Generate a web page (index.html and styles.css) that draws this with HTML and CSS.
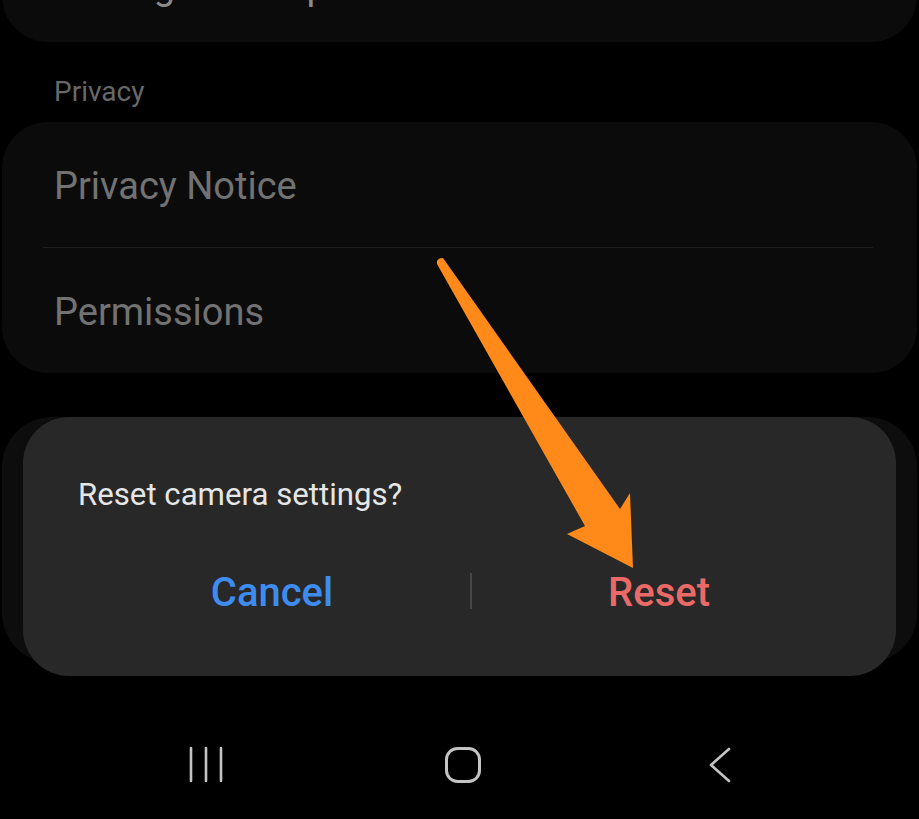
FILE: index.html
```html
<!DOCTYPE html>
<html>
<head>
  <title>Camera settings</title>
  <link rel="stylesheet" href="styles.css">
</head>
<body>
  <div class="screen">
    <div class="card card-top">
      <div class="row">Settings to keep</div>
    </div>

    <div class="section-title">Privacy</div>
    <div class="card">
      <div class="row">Privacy Notice</div>
      <div class="divider"></div>
      <div class="row">Permissions</div>
    </div>

    <div class="card card-under"></div>

    <div class="navbar">
      <div class="nav-btn">
        <svg width="40" height="40" viewBox="0 0 40 40">
          <path d="M5 3v33M20 3v33M35 3v33" stroke="#c4c4c4" stroke-width="2.6" fill="none" stroke-linecap="round"/>
        </svg>
      </div>
      <div class="nav-btn">
        <svg width="40" height="40" viewBox="0 0 40 40">
          <rect x="3.5" y="3.5" width="33" height="33" rx="11" stroke="#c4c4c4" stroke-width="3" fill="none"/>
        </svg>
      </div>
      <div class="nav-btn">
        <svg width="40" height="40" viewBox="0 0 40 40">
          <path d="M29 4L11 20L29 36" stroke="#c4c4c4" stroke-width="2.6" fill="none" stroke-linecap="round" stroke-linejoin="round"/>
        </svg>
      </div>
    </div>

    <!-- dialog sits over the dimmed settings card -->
    <div class="dialog">
      <div class="dialog-text">Reset camera settings?</div>
      <div class="dialog-buttons">
        <div class="btn btn-cancel">Cancel</div>
        <div class="btn-sep"></div>
        <div class="btn btn-reset">Reset</div>
      </div>
    </div>

    <svg class="pointer" width="919" height="819" viewBox="0 0 919 819">
      <path d="M437 264 Q436 258 443 258 L620 509 L630 493 L633 568 L567 534 L585 526 Z" fill="#ff8a1a"/>
    </svg>
  </div>
</body>
</html>
```

FILE: styles.css
```css
html, body {
  margin: 0;
  padding: 0;
  background: #000;
}

.screen {
  position: relative;
  width: 919px;
  height: 819px;
  overflow: hidden;
  font-family: Roboto, "Liberation Sans", sans-serif;
}

/* Settings cards */
.card {
  margin: 0 2px;
  background: #0b0b0b;
  border-radius: 46px;
}

.card-top {
  margin-top: -78px;
  padding-top: 41px;
  padding-bottom: 33px;
}

.card-top .row {
  padding: 0 54px;
  color: #8a8a8a;
}

.row {
  padding: 41px 52px 38px;
  font-size: 38px;
  line-height: 46px;
  color: #727272;
}

.card-top .row {
  padding-top: 0;
  padding-bottom: 0;
}

.divider {
  height: 1px;
  margin: 0 44px 0 41px;
  background: #1e1e1e;
}

.section-title {
  margin: 33px 0 13px 54px;
  font-size: 28px;
  line-height: 34px;
  color: #686868;
}

.card-under {
  margin-top: 44px;
  height: 246px;
  background: #0d0d0d;
  border-radius: 50px;
}

/* Navigation bar */
.navbar {
  display: flex;
  justify-content: center;
  margin-top: 82px;
  padding-left: 7px;
}

.nav-btn {
  width: 257px;
  display: flex;
  justify-content: center;
}

/* Reset dialog */
.dialog {
  position: absolute;
  left: 23px;
  top: 417px;
  width: 873px;
  height: 259px;
  box-sizing: border-box;
  padding: 60px 0 0 55px;
  background: #282828;
  border-radius: 46px;
}

.dialog-text {
  font-size: 31.2px;
  line-height: 36px;
  color: #e6e6e6;
}

.dialog-buttons {
  display: flex;
  align-items: center;
  margin-top: 56px;
  margin-left: -4px;
}

.btn {
  flex: none;
  text-align: center;
  font-size: 40px;
  line-height: 48px;
  font-weight: 500;
}

.btn-cancel {
  width: 396px;
  color: #3f8cef;
}

.btn-reset {
  width: 374px;
  color: #eb6a67;
}

.btn-sep {
  width: 2px;
  height: 36px;
  margin-top: -4px;
  background: #474747;
}

.pointer {
  position: absolute;
  left: 0;
  top: 0;
  pointer-events: none;
}
```
